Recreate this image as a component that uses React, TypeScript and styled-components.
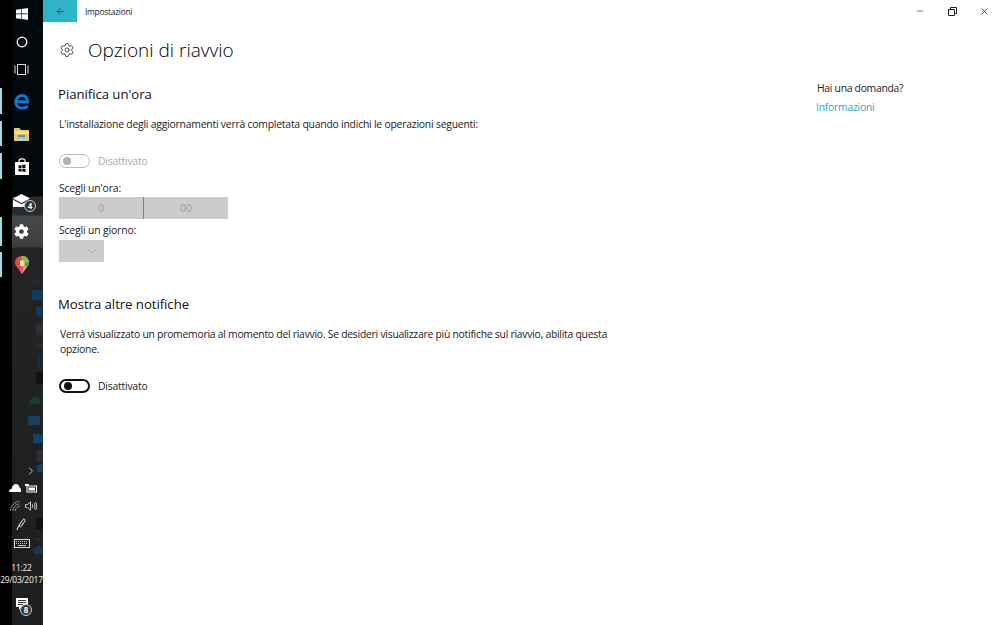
import React from 'react';
import styled, { createGlobalStyle } from 'styled-components';
import { ArrowLeft, Settings, Minus, X, ChevronDown, ChevronRight } from 'lucide-react';
import { FaCog } from 'react-icons/fa';

const Global = createGlobalStyle`
  html, body { margin: 0; padding: 0; background: #fff; }
  #root { width: 1000px; height: 625px; overflow: hidden; }
  * { box-sizing: border-box; }
`;

const font = `"Open Sans", "Noto Sans", sans-serif`;

const Shell = styled.div`
  width: 1000px; height: 625px; display: flex; font-family: ${font}; color: #1a1a1a; background: #fff;
`;

const Taskbar = styled.aside`
  width: 43px; height: 625px; flex: none; display: grid; grid-template-columns: 12px 31px; background: #000; position: relative; overflow: hidden;
`;
const DarkStrip = styled.div`
  grid-column: 2;
  background: linear-gradient(180deg, #02090c 0, #02090c 196px, #2b2b2b 197px, #2b2b2b 215px, #44484a 216px, #3e3e3e 247px, #232323 248px, #1d1f20 625px);
`;
const Backdrop = styled.svg`
  position: absolute; left: 12px; top: 260px;
`;
const Tray = styled.div`
  position: absolute; inset: 0; display: flex; flex-direction: column; color: #fff;
`;
const Slot = styled.div<{ $h: number; $running?: boolean }>`
  height: ${p => p.$h}px; flex: none; display: flex; align-items: center; justify-content: center; position: relative; width: 43px;
  &::before {
    content: ''; display: ${p => (p.$running ? 'block' : 'none')}; position: absolute; left: 0; top: 2px; bottom: 2px; width: 2px; background: #9fd9e4;
  }
`;
const Spacer = styled.div`flex: 1;`;
const TrayPair = styled.div<{ $h: number }>`
  height: ${p => p.$h}px; flex: none; display: grid; grid-template-columns: 18px 14px; padding-left: 6px; align-items: center; justify-items: center;
`;
const TrayRow = styled.div<{ $h: number }>`
  height: ${p => p.$h}px; flex: none; display: flex; justify-content: center; align-items: center; width: 43px;
`;
const Clock = styled.div`
  height: 24px; flex: none; width: 43px; text-align: center; font-size: 8.4px; line-height: 12px; color: #f0f0f0; white-space: nowrap; margin: 9px 0 2px; letter-spacing: -.2px;
`;
const Badge = styled.span<{ $r: number }>`
  position: absolute; right: ${p => p.$r}px; bottom: 3px; width: 12px; height: 12px; border-radius: 50%; background: #333; border: 1px solid #ccc; color: #fff; font-size: 8px; font-weight: 700; display: flex; align-items: center; justify-content: center; line-height: 1;
`;

const Main = styled.main`
  flex: 1; display: flex; flex-direction: column; min-width: 0;
`;
const TitleBar = styled.header`
  height: 22px; display: flex; align-items: center; flex: none;
`;
const BackButton = styled.div`
  width: 34px; height: 22px; background: #2fb3c9; color: #0e3640; display: flex; align-items: center; justify-content: center;
`;
const AppName = styled.span`
  font-size: 8.4px; margin-left: 8px; flex: 1; color: #222; letter-spacing: -.25px;
`;
const WinButton = styled.div`
  width: 32px; height: 22px; display: flex; align-items: center; justify-content: center; color: #222;
`;
const Page = styled.div`
  flex: 1; display: flex;
`;
const Left = styled.section`
  width: 774px; flex: none; padding-left: 15px;
`;
const PageHeader = styled.div`
  display: flex; align-items: center; height: 28px; margin-top: 14px; padding-left: 1px;
`;
const GearBox = styled.span`
  width: 29px; display: flex; color: #222; flex: none;
`;
const H1 = styled.h1`
  font-weight: 300; font-size: 19px; margin: 0; color: #000; white-space: nowrap;
`;
const H2 = styled.h2<{ $top: number }>`
  font-weight: 400; font-size: 13.2px; line-height: 18px; margin: ${p => p.$top}px 0 0; color: #111; letter-spacing: -.05px;
`;
const Body = styled.p<{ $top: number; $tight?: boolean }>`
  font-size: 10.4px; line-height: 15px; margin: ${p => p.$top}px 0 0 ${p => (p.$tight ? 2 : 1)}px; width: 565px; color: #222; letter-spacing: ${p => (p.$tight ? '-.26px' : '-.22px')};
`;
const ToggleRow = styled.div<{ $top: number; $off?: boolean }>`
  display: flex; align-items: center; gap: 8px; height: 16px; margin: ${p => p.$top}px 0 0 1px; font-size: 10.4px; letter-spacing: -.22px; color: ${p => (p.$off ? '#aaa' : '#222')};
`;
const Toggle = styled.span<{ $off?: boolean }>`
  width: 31px; height: 14px; border-radius: 7px; border: ${p => (p.$off ? '1.5px solid #bbb' : '2px solid #111')}; display: flex; align-items: center; padding-left: 3px;
  &::after { content: ''; width: 8px; height: 8px; border-radius: 50%; background: ${p => (p.$off ? '#b0b0b0' : '#111')}; }
`;
const Label = styled.div<{ $top: number }>`
  font-size: 10.4px; line-height: 16px; margin: ${p => p.$top}px 0 1px 1px; color: #222; letter-spacing: -.15px;
`;
const TimePicker = styled.div`
  width: 169px; height: 22px; margin-left: 1px; background: #ccc; display: flex; color: #999; font-size: 10px;
`;
const TimeCell = styled.div<{ $w: number; $line?: boolean }>`
  width: ${p => p.$w}px; display: flex; align-items: center; justify-content: center;
  border-right: ${p => (p.$line ? '1px solid #808080' : 'none')};
`;
const DayBox = styled.div`
  width: 45px; height: 22px; margin: 2px 0 0 1px; background: #ccc; color: #999; display: flex; align-items: center; justify-content: flex-end; padding-right: 4px;
`;
const Right = styled.aside`
  padding-top: 57px; font-size: 10.4px; line-height: 19px; color: #222; letter-spacing: -.3px;
`;
const Help = styled.div``;
const HelpLink = styled.div`color: #2fa9bd; margin-left: -1px; letter-spacing: -.25px;`;

function WinLogo() {
  return (
    <svg width="12" height="12" viewBox="0 0 12 12"><path fill="#fff" d="M0 1.7 5 1v4.6H0zM5.600.9 12 0v5.600H5.600zM0 6.300h5v4.700l-5-.7zM5.600 6.300H12V12l-6.400-.9z" /></svg>
  );
}
function Edge() {
  return (
    <svg width="16" height="17" viewBox="0 0 16 17" fill="none" stroke="#0a78d7" strokeWidth="3"><path d="M3 8.800h10.500c0-3.800-2.400-6.300-5.500-6.300S1.800 5.200 1.800 9.200c0 3.600 2.500 5.800 6 5.800 2 0 3.800-.5 6-1.700" /></svg>
  );
}
function Folder() {
  return (
    <svg width="15" height="14" viewBox="0 0 15 14"><path fill="#e9c46a" d="M0 1h5.500l1.500 2h8v11H0z" /><path fill="#f6dd94" d="M0 4h15v3H0z" /><path fill="#3aa0d8" d="M4 8h7v2.500H4z" /><path fill="#9ed2ee" d="M5 10.500h5V14H5z" /></svg>
  );
}
function Store() {
  return (
    <svg width="14" height="17" viewBox="0 0 14 17"><path fill="none" stroke="#fff" strokeWidth="1.200" d="M4 4V2.800C4 1.500 5.200.8 7 .8s3 .7 3 2V4" /><path fill="#fff" d="M0 4h14v13H0z" /><path fill="#111" d="M3.500 7.500 6.500 7v3h-3zM7.200 7l3.300-.5V10H7.200zM3.500 10.700h3v3l-3-.4zM7.200 10.700h3.300V14l-3.300-.4z" /></svg>
  );
}
function Mail() {
  return (
    <svg width="17" height="13" viewBox="0 0 17 13"><path fill="#fff" d="M0 4.500 8.500 0 17 4.500 8.500 9z" /><path fill="#fff" d="M0 5.800 8.500 10.300 14 7.400v5.600H0z" /></svg>
  );
}
function Maps() {
  return (
    <svg width="14" height="18" viewBox="0 0 14 18">
      <path fill="#e8483f" d="M7 0C3 0 0 2.800 0 6.500c0 1.500.5 2.800 1.500 4L7 18V0z" />
      <path fill="#f6a83c" d="M7 0c4 0 7 2.800 7 6.500 0 1.500-.5 2.800-1.500 4L7 18V0z" />
      <path fill="#ef4da0" d="M3 11.500 7 18l2-7z" />
      <path fill="#7cc04a" d="M6 .5h5l2 5H8z" />
      <path fill="#2a9fc0" d="M10 6h4l-1 4-3 1z" />
      <path fill="#f3efe0" d="M5 4.500h3.500v5.500H5z" />
    </svg>
  );
}
function Cloud() {
  return (
    <svg width="12" height="8" viewBox="0 0 12 8"><path fill="#fff" d="M0 8C0 6 1.200 5 2.500 5 3 2 5 0 7 0c2 0 3.200 1.300 3.500 3.400C11.500 3.800 12 5 12 6.200V8z" /></svg>
  );
}
function Battery() {
  return (
    <svg width="12" height="9" viewBox="0 0 12 9"><rect x="2" y="2" width="9.500" height="6" fill="none" stroke="#fff" /><rect x="3.500" y="3.500" width="6.500" height="3" fill="#fff" /><path fill="#fff" d="M0 0h4v2H0z" /></svg>
  );
}
function Wifi() {
  return (
    <svg width="10" height="10" viewBox="0 0 10 10" fill="none" stroke="#ccc" strokeWidth=".9"><path d="M.5 9.500C.5 5 5 .5 9.500.5M3 9.500C3 6.500 6.500 3 9.500 3M5.500 9.500c0-2 2-4 4-4" strokeDasharray="1.500 .7" /></svg>
  );
}
function Speaker() {
  return (
    <svg width="12" height="10" viewBox="0 0 12 10" fill="none" stroke="#ddd" strokeWidth=".9"><path d="M.5 3.500h2L5.500.8v8.400L2.500 6.500h-2z" /><path d="M7.200 3.200c.7 1 .7 2.600 0 3.600M9 2c1.200 1.800 1.200 4.200 0 6M10.600 1c1.600 2.500 1.600 5.500 0 8" /></svg>
  );
}
function Pen() {
  return (
    <svg width="11" height="13" viewBox="0 0 11 13" fill="none" stroke="#eee" strokeWidth="1"><path d="M.8 12 3 7.200 7 1.500c.8-1 2.500 0 2 1.200L5.500 8.200C4 10.200 3 8 4 6.800" /></svg>
  );
}
function Keyboard() {
  return (
    <svg width="16" height="9" viewBox="0 0 16 9"><rect x=".5" y=".5" width="15" height="8" fill="none" stroke="#ddd" /><path stroke="#ccc" strokeWidth="1" strokeDasharray="1 1" d="M2 2.500h12M2 4.500h12" /><path stroke="#ccc" d="M4 6.500h8" /></svg>
  );
}
function Notes() {
  return (
    <svg width="12" height="12" viewBox="0 0 12 12"><path fill="#fff" d="M0 0h12v9H5.500L3 12V9H0z" /><path stroke="#333" d="M2 2.500h8M2 4.500h8M2 6.500h5" /></svg>
  );
}
function Restore() {
  return (
    <svg width="9" height="9" viewBox="0 0 9 9" fill="none" stroke="#222"><path d="M.5 2.500h6v6h-6z" /><path d="M2.500 2.500V.5h6v6h-2" /></svg>
  );
}

export default function App() {
  return (
    <Shell>
      <Global />
      <Taskbar>
        <DarkStrip />
        <Backdrop width="31" height="365" viewBox="0 0 31 365">
          <path fill="#1b2a44" d="M22 20l2-4 2 4 3 1-2 2 1 3-4-2-3 2 1-3-2-2z" />
          <path fill="#123a5c" d="M20 30h11v10H20z" />
          <path fill="#123a5c" d="M24 47h7v8l-3 3-4-4z" />
          <path fill="#2c3036" d="M24 64h7v11h-7z" />
          <path fill="#2a2a2a" d="M24 83h7v4h-7z" />
          <path fill="#12304a" d="M28 95v12l-3 2-2-2 3-1V95z" />
          <path fill="#111" d="M24 112h7v12h-7z" />
          <path fill="#13442a" d="M18 140c4-4 8-3 10 0v4h-10z" />
          <path fill="#1b3e5c" d="M16 156h12v9H16z" />
          <path fill="#12426b" d="M21 174h10v9H21z" />
          <path fill="#2c3036" d="M25 190h6v12h-6z" />
          <path fill="#12426b" d="M25 206l6-3v9h-6z" />
          <path fill="#111" d="M24 258h7v11h-7z" />
          <path fill="#2a2a2a" d="M24 278h7v2h-7z" />
          <path fill="#1b3552" d="M20 290l7-5 4 4v5h-9z" />
        </Backdrop>
        <Tray>
          <Slot $h={28}><WinLogo /></Slot>
          <Slot $h={27}><svg width="12" height="12" viewBox="0 0 12 12" fill="none" stroke="#fff" strokeWidth="1.300"><circle cx="6" cy="6" r="4.800" /></svg></Slot>
          <Slot $h={28}><svg width="15" height="11" viewBox="0 0 15 11" fill="none" stroke="#ddd"><rect x="3.500" y=".5" width="8" height="10" /><path d="M1 1.500v8M14 1.500v8" /></svg></Slot>
          <Slot $h={3} />
          <Slot $h={30} $running><Edge /></Slot>
          <Slot $h={3} />
          <Slot $h={29} $running><Folder /></Slot>
          <Slot $h={3} />
          <Slot $h={30} $running><Store /></Slot>
          <Slot $h={4} />
          <Slot $h={30}><Mail /><Badge $r={7}>4</Badge></Slot>
          <Slot $h={33} $running><FaCog size={15} color="#fff" /></Slot>
          <Slot $h={2} />
          <Slot $h={29} $running><Maps /></Slot>
          <Spacer />
          <TrayPair $h={16}><span /><ChevronRight size={12} strokeWidth={1.500} color="#fff" /></TrayPair>
          <TrayPair $h={18}><Cloud /><Battery /></TrayPair>
          <TrayPair $h={18}><Wifi /><Speaker /></TrayPair>
          <TrayRow $h={19}><Pen /></TrayRow>
          <TrayRow $h={19}><Keyboard /></TrayRow>
          <Clock>11:22<br />29/03/2017</Clock>
          <Slot $h={31}><Notes /><Badge $r={11}>8</Badge></Slot>
          <Slot $h={6} />
        </Tray>
      </Taskbar>
      <Main>
        <TitleBar>
          <BackButton><ArrowLeft size={11} strokeWidth={1.500} /></BackButton>
          <AppName>Impostazioni</AppName>
          <WinButton><Minus size={10} strokeWidth={1.500} /></WinButton>
          <WinButton><Restore /></WinButton>
          <WinButton><X size={11} strokeWidth={1.500} /></WinButton>
        </TitleBar>
        <Page>
          <Left>
            <PageHeader>
              <GearBox><Settings size={16} strokeWidth={1.200} /></GearBox>
              <H1>Opzioni di riavvio</H1>
            </PageHeader>
            <H2 $top={21}>Pianifica un'ora</H2>
            <Body $top={14}>L'installazione degli aggiornamenti verrà completata quando indichi le operazioni seguenti:</Body>
            <ToggleRow $top={21} $off><Toggle $off />Disattivato</ToggleRow>
            <Label $top={11}>Scegli un'ora:</Label>
            <TimePicker>
              <TimeCell $w={85} $line>0</TimeCell>
              <TimeCell $w={84}>00</TimeCell>
            </TimePicker>
            <Label $top={3}>Scegli un giorno:</Label>
            <DayBox><ChevronDown size={16} strokeWidth={1} /></DayBox>
            <H2 $top={33}>Mostra altre notifiche</H2>
            <Body $top={14} $tight>Verrà visualizzato un promemoria al momento del riavvio. Se desideri visualizzare più notifiche sul riavvio, abilita questa opzione.</Body>
            <ToggleRow $top={21}><Toggle />Disattivato</ToggleRow>
          </Left>
          <Right>
            <Help>Hai una domanda?</Help>
            <HelpLink>Informazioni</HelpLink>
          </Right>
        </Page>
      </Main>
    </Shell>
  );
}
